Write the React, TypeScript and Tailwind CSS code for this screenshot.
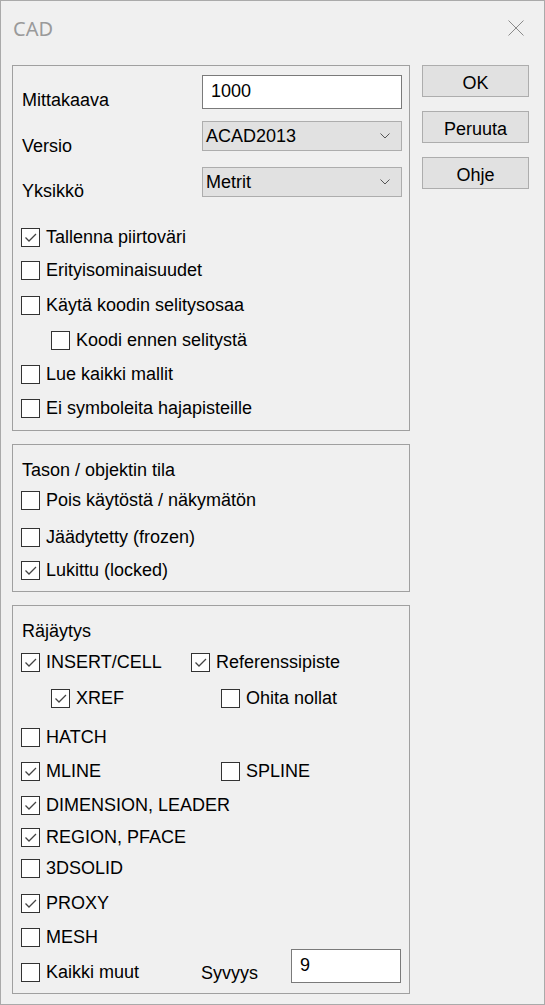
import React from 'react';

const font = { fontFamily: '"Liberation Sans", Arial, sans-serif' };

function Box({ checked }: { checked?: boolean }) {
  return (
    <div className="w-[19px] h-[19px] shrink-0 border border-[#333333] bg-white flex items-center justify-center">
      {checked && (
        <svg width="17" height="17" viewBox="0 0 17 17">
          <polyline points="3.5,8.5 7,12 14,5" fill="none" stroke="#444444" strokeWidth="1.3" />
        </svg>
      )}
    </div>
  );
}

function Check({ label, checked, className = '' }: { label: string; checked?: boolean; className?: string }) {
  return (
    <div className={`flex items-center h-[20px] ${className}`}>
      <Box checked={checked} />
      <span className="ml-[6px] whitespace-nowrap">{label}</span>
    </div>
  );
}

function Select({ value }: { value: string }) {
  return (
    <div className="w-[200px] h-[30px] bg-[#e1e1e1] border border-[#adadad] flex items-center justify-between pl-[3px] pr-[11px]">
      <span>{value}</span>
      <svg width="10" height="6" viewBox="0 0 10 6">
        <polyline points="0.5,0.5 5,5 9.5,0.5" fill="none" stroke="#555555" strokeWidth="1" />
      </svg>
    </div>
  );
}

function Btn({ label, className = '' }: { label: string; className?: string }) {
  return (
    <div className={`w-[107px] h-[32px] bg-[#e1e1e1] border border-[#adadad] flex items-center justify-center pt-[3px] ${className}`}>
      {label}
    </div>
  );
}

export default function App() {
  return (
    <div style={font} className="relative w-[545px] h-[1005px] bg-[#f0f0f0] border border-[#aaaaaa] flex flex-col text-[18px] leading-[20px] text-black overflow-hidden">
      {/* window edge tint lower right */}
      <div className="absolute right-[-1px] top-[504px] bottom-[-1px] w-[1px] bg-[#b8973c]" />

      {/* title bar */}
      <div className="h-[64px] flex items-start justify-between">
        <div
          className="ml-[12px] mt-[16px] text-[20px] leading-[24px] text-[#9a9a9a]"
          style={{ fontFamily: '"Noto Sans", "Open Sans", sans-serif' }}
        >
          CAD
        </div>
        <svg className="mt-[19px] mr-[20px]" width="16" height="16" viewBox="0 0 16 16">
          <path d="M0.5 0.5 L15.5 15.5 M15.5 0.5 L0.5 15.5" stroke="#8a8a8a" strokeWidth="1" />
        </svg>
      </div>

      <div className="flex">
        <div className="ml-[11px] w-[398px] flex flex-col">
          {/* group 1 */}
          <div className="border border-[#a0a0a0] pt-[9px] pb-[12px] pl-[8px]">
            <div className="flex items-end">
              <div className="w-[180px] ml-[1px] mb-[-1px]">Mittakaava</div>
              <div className="w-[200px] h-[34px] bg-white border border-[#7a7a7a] pl-[8px] pt-[5px]">1000</div>
            </div>
            <div className="flex items-end mt-[12px]">
              <div className="w-[180px] ml-[1px] mb-[-5px]">Versio</div>
              <Select value="ACAD2013" />
            </div>
            <div className="flex items-end mt-[16px]">
              <div className="w-[180px] ml-[1px] mb-[-4px]">Yksikkö</div>
              <Select value="Metrit" />
            </div>
            <Check className="mt-[30px]" label="Tallenna piirtoväri" checked />
            <Check className="mt-[13px]" label="Erityisominaisuudet" />
            <Check className="mt-[15px]" label="Käytä koodin selitysosaa" />
            <Check className="mt-[15px] ml-[30px]" label="Koodi ennen selitystä" />
            <Check className="mt-[14px]" label="Lue kaikki mallit" />
            <Check className="mt-[14px]" label="Ei symboleita hajapisteille" />
          </div>

          {/* group 2 */}
          <div className="mt-[13px] border border-[#a0a0a0] pt-[15px] pb-[11px] pl-[8px]">
            <div className="h-[20px] ml-[1px]">Tason / objektin tila</div>
            <Check className="mt-[10px]" label="Pois käytöstä / näkymätön" />
            <Check className="mt-[17px]" label="Jäädytetty (frozen)" />
            <Check className="mt-[13px]" label="Lukittu (locked)" checked />
          </div>

          {/* group 3 */}
          <div className="mt-[13px] border border-[#a0a0a0] pt-[15px] pb-[10px] pl-[8px]">
            <div className="h-[20px] ml-[1px]">Räjäytys</div>
            <div className="flex mt-[11px]">
              <Check className="w-[170px]" label="INSERT/CELL" checked />
              <Check label="Referenssipiste" checked />
            </div>
            <div className="flex mt-[16px]">
              <Check className="w-[170px] ml-[30px]" label="XREF" checked />
              <Check label="Ohita nollat" />
            </div>
            <Check className="mt-[19px]" label="HATCH" />
            <div className="flex mt-[14px]">
              <Check className="w-[200px]" label="MLINE" checked />
              <Check label="SPLINE" />
            </div>
            <Check className="mt-[14px]" label="DIMENSION, LEADER" checked />
            <Check className="mt-[12px]" label="REGION, PFACE" checked />
            <Check className="mt-[11px]" label="3DSOLID" />
            <Check className="mt-[15px]" label="PROXY" checked />
            <Check className="mt-[14px]" label="MESH" />
            <div className="flex items-end mt-[2px]">
              <Check className="w-[180px] mb-[1px]" label="Kaikki muut" />
              <div className="w-[90px]">Syvyys</div>
              <div className="w-[110px] h-[34px] bg-white border border-[#7a7a7a] pl-[8px] pt-[5px]">9</div>
            </div>
          </div>
        </div>

        <div className="ml-[12px] flex flex-col">
          <Btn label="OK" />
          <Btn className="mt-[14px]" label="Peruuta" />
          <Btn className="mt-[14px]" label="Ohje" />
        </div>
      </div>
    </div>
  );
}
